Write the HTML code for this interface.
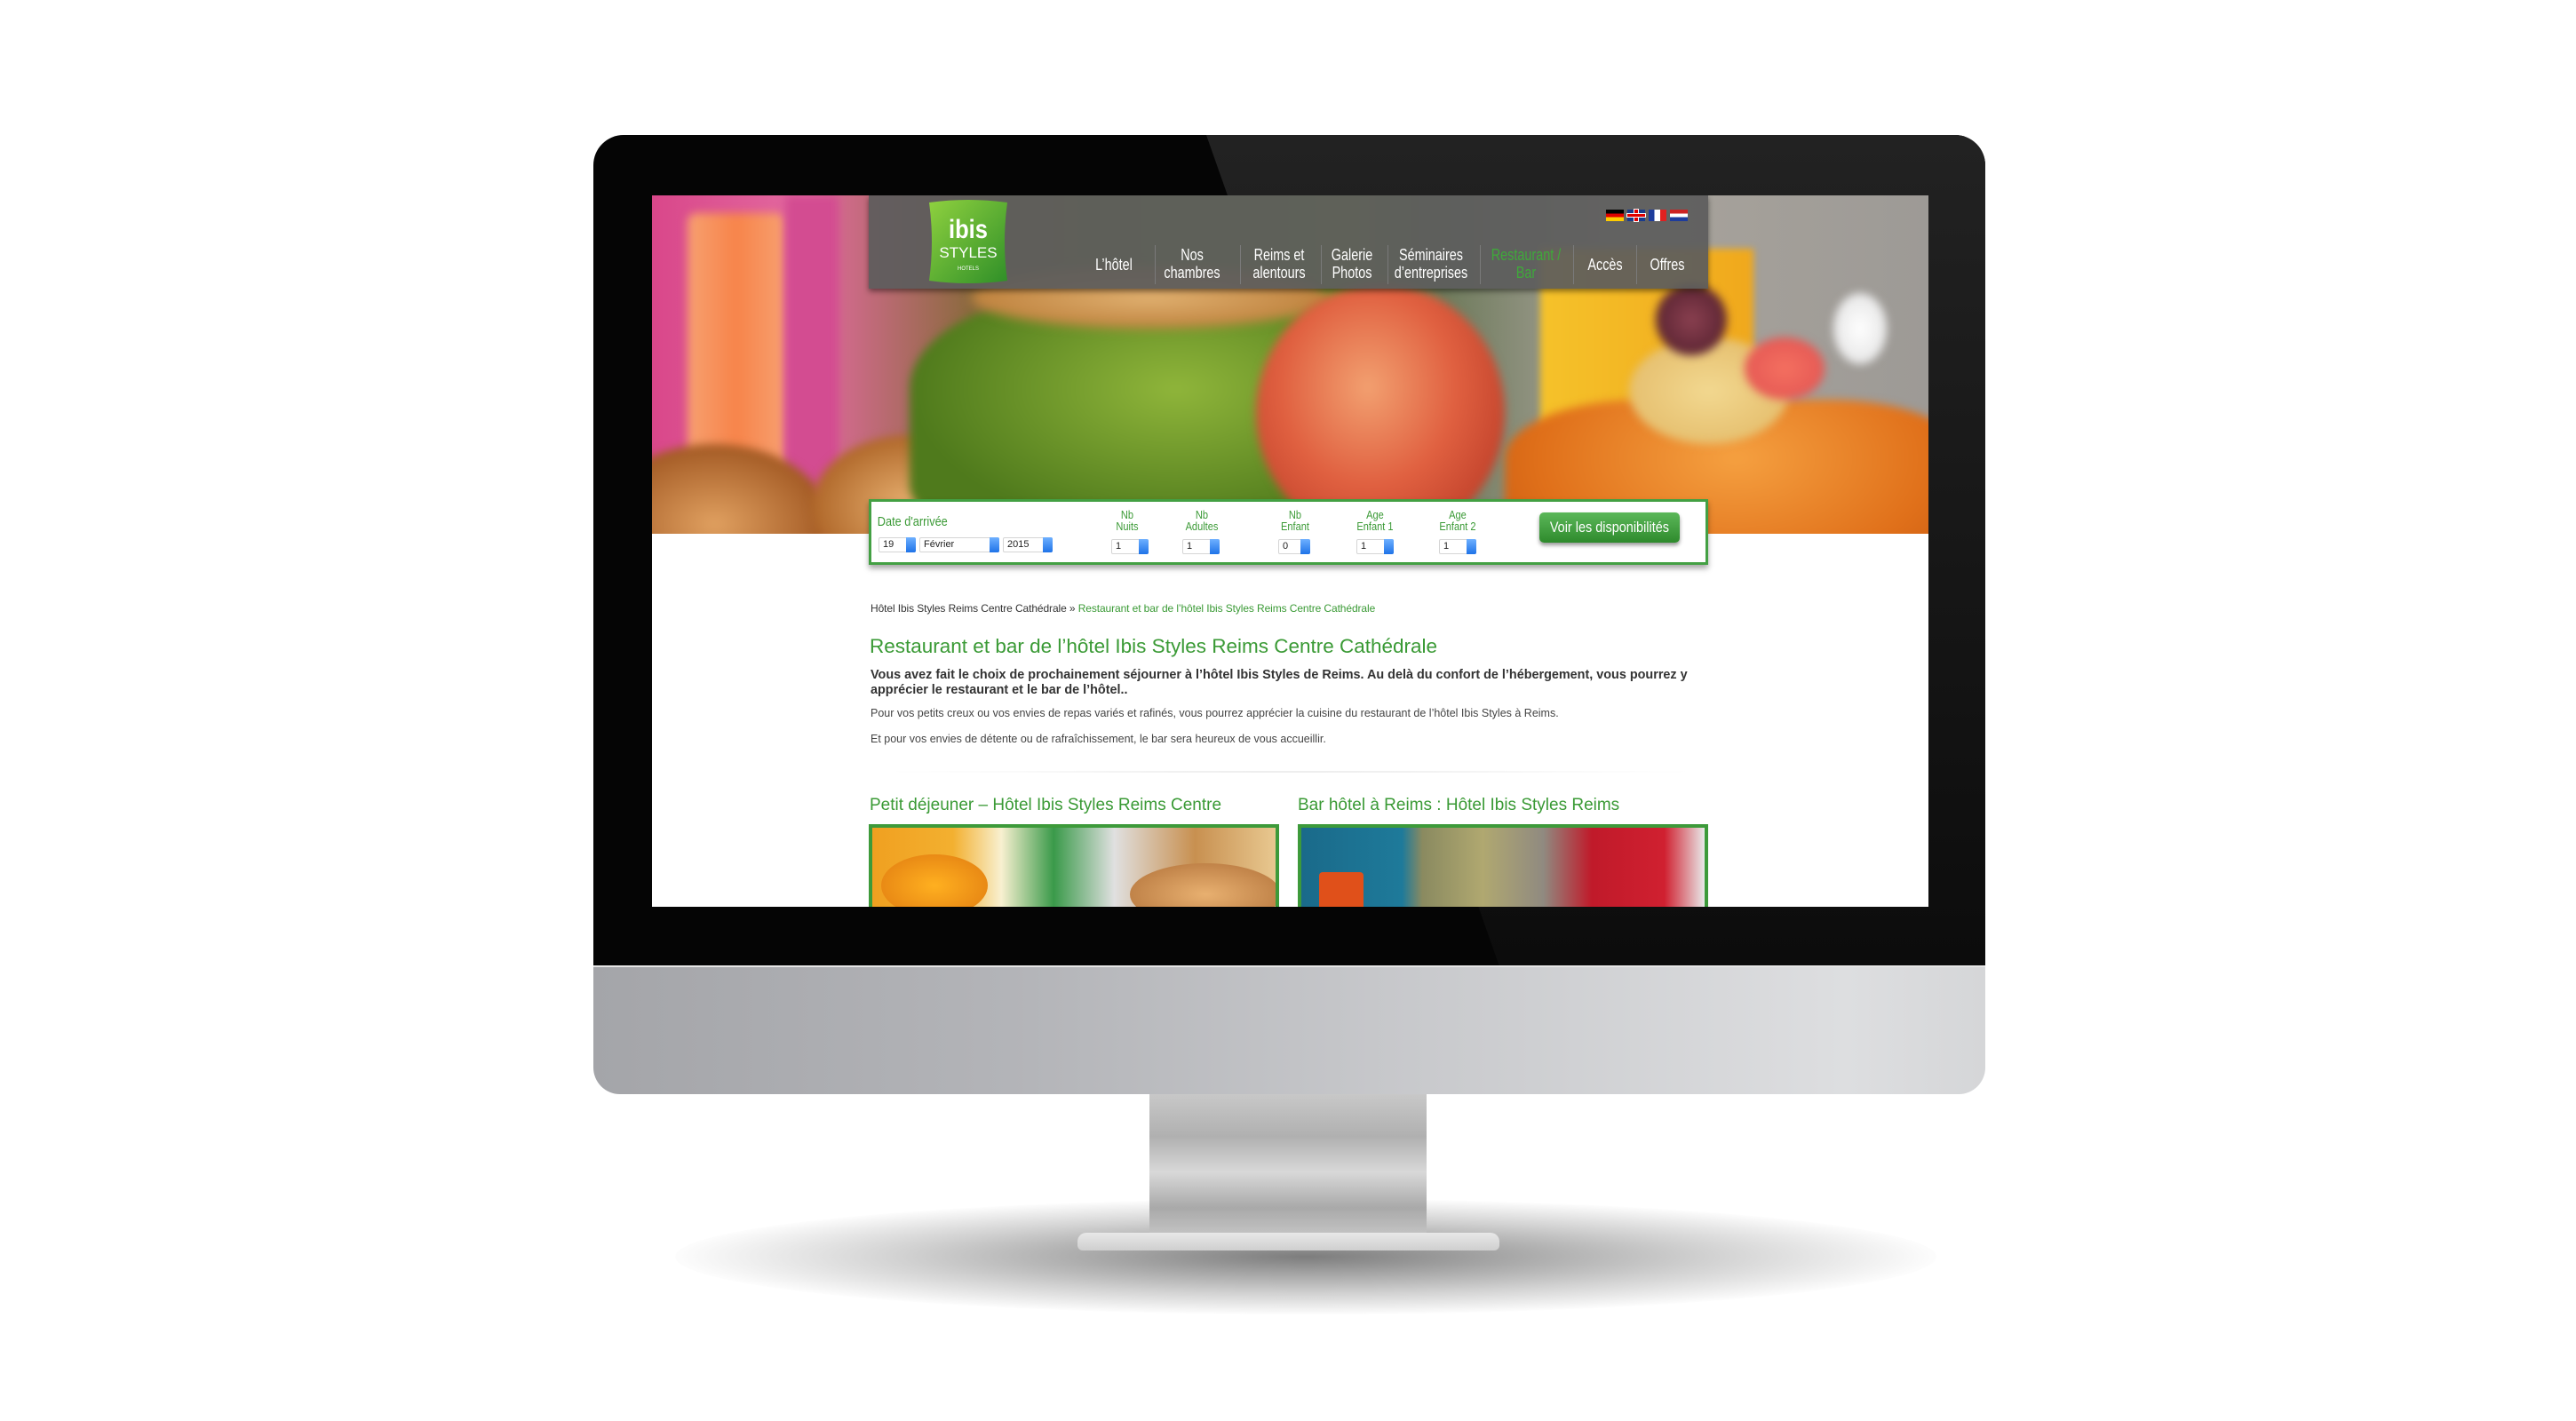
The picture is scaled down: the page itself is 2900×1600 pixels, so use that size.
<!DOCTYPE html>
<html><head><meta charset="utf-8">
<style>
*{margin:0;padding:0;box-sizing:border-box}
body{width:2900px;height:1600px;background:#fff;position:relative;overflow:hidden;font-family:"Liberation Sans",sans-serif}
.abs{position:absolute}
#bezel{left:668px;top:152px;width:1567px;height:936px;background:#050505;border-radius:34px 34px 0 0}
#glare{left:668px;top:152px;width:1567px;height:936px;border-radius:34px 34px 0 0;overflow:hidden}
#chin{left:668px;top:1087px;width:1567px;height:145px;background:linear-gradient(90deg,#a4a5a9 0%,#b3b4b8 30%,#c9cacd 60%,#dddee0 90%,#d5d6d8 100%);border-radius:0 0 30px 30px;border-top:2px solid #e6e6e6}
#shadow{left:760px;top:1350px;width:1420px;height:130px;border-radius:50%;background:radial-gradient(ellipse at center,rgba(70,70,70,.7) 0%,rgba(140,140,140,.4) 45%,rgba(255,255,255,0) 72%)}
#neck{left:1294px;top:1232px;width:312px;height:160px;background:linear-gradient(180deg,#c8c8c8 0%,#b0b0b0 30%,#d8d8d8 55%,#a9a9a9 80%,#c5c5c5 100%)}
#foot{left:1213px;top:1388px;width:475px;height:20px;background:linear-gradient(#e8e8e8,#cfcfcf);border-radius:10px 10px 6px 6px}
#screen{left:734px;top:220px;width:1437px;height:801px;background:#fff;overflow:hidden}
.hero{position:absolute;left:0;top:0;width:1437px;height:381px;overflow:hidden;background:linear-gradient(90deg,#d9478a 0%,#e36aa0 12%,#8b6a3e 25%,#6c8a2a 40%,#7d9a33 55%,#6f7b5c 62%,#a9a49c 75%,#9d9a96 100%)}
.hero .blob{filter:blur(5px)}
.blob{position:absolute;border-radius:50%}
#nav{left:244px;top:0;width:945px;height:105px;background:rgba(92,92,92,.93);box-shadow:0 3px 6px rgba(0,0,0,.45)}
.ni{position:absolute;top:57px;width:120px;color:#fff;font-size:18px;line-height:20px;text-align:center;transform:scaleX(.8);white-space:nowrap}
.sep{position:absolute;top:56px;width:1px;height:44px;background:#7a7a7a}
#book{left:244px;top:342px;width:945px;height:74px;background:#fff;border:3px solid #43a043;box-shadow:0 4px 6px rgba(0,0,0,.35)}
.lbl{position:absolute;color:#3b9a36;font-size:13px;line-height:13px;text-align:center;transform:scaleX(.85)}
.sel{position:absolute;height:17px;border:1px solid #d5d5d5;background:#fff;font-size:11px;line-height:15px;padding-left:4px;color:#222;border-radius:2px}
.sel i{position:absolute;right:-1px;top:-1px;width:11px;height:17px;background:linear-gradient(#6eb0ff,#1f73e8);border-radius:0 2px 2px 0}
.g{color:#3a9a35}
</style></head><body>
<div class="abs" id="shadow"></div>
<div class="abs" id="neck"></div>
<div class="abs" id="foot"></div>
<div class="abs" id="bezel"></div>
<div class="abs" id="glare"><svg width="1567" height="936"><defs><linearGradient id="gl" x1="0" y1="0" x2="0" y2="1"><stop offset="0" stop-color="#222"/><stop offset="1" stop-color="#0c0c0c"/></linearGradient></defs><polygon points="690,0 1567,0 1567,936 1020,936" fill="url(#gl)"/></svg></div>
<div class="abs" id="chin"></div>
<div class="abs" id="screen">
 <div class="hero">
  <div class="blob" style="left:40px;top:20px;width:110px;height:380px;border-radius:10px;background:linear-gradient(90deg,#f7a070,#f7844a 50%,#f7a070);"></div>
  <div class="blob" style="left:150px;top:0;width:60px;height:381px;border-radius:0;background:#d34c91"></div>
  <div class="blob" style="left:-60px;top:280px;width:260px;height:180px;background:radial-gradient(#e0a060,#a35a24 70%)"></div>
  <div class="blob" style="left:180px;top:270px;width:220px;height:160px;background:radial-gradient(#e8b070,#b0682a 70%)"></div>
  <div class="blob" style="left:290px;top:110px;width:500px;height:270px;border-radius:40% 40% 20% 20%;background:radial-gradient(ellipse at 60% 40%,#8fb53a,#4f7a1c 70%)"></div>
  <div class="blob" style="left:360px;top:80px;width:400px;height:70px;background:radial-gradient(#e0b070,#c08440 70%);filter:blur(6px)"></div>
  <div class="blob" style="left:1000px;top:60px;width:240px;height:230px;border-radius:0;background:linear-gradient(90deg,#f5c22a,#f0a81c);filter:blur(4px)"></div>
  <div class="blob" style="left:680px;top:100px;width:280px;height:290px;background:radial-gradient(ellipse at 45% 40%,#f2a070,#e06040 45%,#c0402a 80%)"></div>
  <div class="blob" style="left:960px;top:230px;width:520px;height:220px;border-radius:30% 30% 10% 10%;background:radial-gradient(ellipse at 50% 30%,#f5a040,#e0701a 60%,#c0520e)"></div>
  <div class="blob" style="left:1100px;top:160px;width:180px;height:120px;background:radial-gradient(#f2d890,#e6c070 70%)"></div>
  <div class="blob" style="left:1130px;top:100px;width:80px;height:80px;background:radial-gradient(#8a4050,#4a1a28)"></div>
  <div class="blob" style="left:1230px;top:160px;width:90px;height:70px;background:radial-gradient(#f47060,#e05050)"></div>
  <div class="blob" style="left:1330px;top:110px;width:60px;height:80px;background:radial-gradient(#fff,#ddd)"></div>
 </div>
 <div class="abs" id="nav">
  <svg class="abs" style="left:62px;top:4px" width="100" height="96" viewBox="0 0 100 96"><defs><linearGradient id="lg" x1="0" y1="0" x2="1" y2="1"><stop offset="0" stop-color="#8fd13f"/><stop offset="1" stop-color="#2f8f28"/></linearGradient></defs><path d="M6 4 Q50 -2 94 4 Q88 48 94 92 Q50 98 6 92 Q12 48 6 4Z" fill="url(#lg)"/><text x="50" y="44" text-anchor="middle" fill="#fff" font-family="Liberation Sans" font-weight="bold" font-size="30" transform="translate(50 0) scale(.85 1) translate(-50 0)">ibis</text><text x="50" y="66" text-anchor="middle" fill="#fff" font-family="Liberation Sans" font-size="17">STYLES</text><text x="50" y="80" text-anchor="middle" fill="#fff" font-family="Liberation Sans" font-size="6">HOTELS</text></svg>
  <div class="abs" style="left:830px;top:16px;width:92px;height:13px;display:flex;gap:4px">
   <div style="width:20px;height:13px;background:linear-gradient(#000 33%,#d00 33% 66%,#fc0 66%)"></div>
   <div style="width:20px;height:13px;background:#1a3c8c;position:relative"><div style="position:absolute;left:8px;top:0;width:4px;height:13px;background:#d00;box-shadow:0 0 0 1px #fff"></div><div style="position:absolute;left:0;top:5px;width:20px;height:3px;background:#d00;box-shadow:0 0 0 1px #fff"></div></div>
   <div style="width:20px;height:13px;background:linear-gradient(90deg,#1e3c9c 33%,#fff 33% 66%,#e02020 66%)"></div>
   <div style="width:20px;height:13px;background:linear-gradient(#c22 33%,#fff 33% 66%,#1e3c9c 66%)"></div>
  </div>
  <div class="ni" style="left:216px;top:68px">L’hôtel</div>
  <div class="sep" style="left:322px"></div>
  <div class="ni" style="left:304px">Nos<br>chambres</div>
  <div class="sep" style="left:418px"></div>
  <div class="ni" style="left:402px">Reims et<br>alentours</div>
  <div class="sep" style="left:509px"></div>
  <div class="ni" style="left:484px">Galerie<br>Photos</div>
  <div class="sep" style="left:584px"></div>
  <div class="ni" style="left:573px">Séminaires<br>d’entreprises</div>
  <div class="sep" style="left:688px"></div>
  <div class="ni" style="left:680px;color:#3fa93a">Restaurant /<br>Bar</div>
  <div class="sep" style="left:793px"></div>
  <div class="ni" style="left:769px;top:68px">Accès</div>
  <div class="sep" style="left:864px"></div>
  <div class="ni" style="left:839px;top:68px">Offres</div>
 </div>
 <div class="abs" id="book">
  <div class="lbl" style="left:0px;top:16px;text-align:left;font-size:15px;transform-origin:0 0;padding-left:8px">Date d'arrivée</div>
  <div class="sel" style="left:8px;top:40px;width:42px">19<i></i></div>
  <div class="sel" style="left:54px;top:40px;width:90px">Février<i></i></div>
  <div class="sel" style="left:148px;top:40px;width:56px">2015<i></i></div>
  <div class="lbl" style="left:268px;top:8px;width:40px">Nb<br>Nuits</div>
  <div class="sel" style="left:270px;top:42px;width:42px">1<i></i></div>
  <div class="lbl" style="left:344px;top:8px;width:56px">Nb<br>Adultes</div>
  <div class="sel" style="left:350px;top:42px;width:42px">1<i></i></div>
  <div class="lbl" style="left:452px;top:8px;width:50px">Nb<br>Enfant</div>
  <div class="sel" style="left:458px;top:42px;width:36px">0<i></i></div>
  <div class="lbl" style="left:537px;top:8px;width:60px">Age<br>Enfant 1</div>
  <div class="sel" style="left:546px;top:42px;width:42px">1<i></i></div>
  <div class="lbl" style="left:630px;top:8px;width:60px">Age<br>Enfant 2</div>
  <div class="sel" style="left:639px;top:42px;width:42px">1<i></i></div>
  <div class="abs" style="left:752px;top:12px;width:158px;height:34px;border-radius:5px;background:linear-gradient(#5cb85a,#2e8a2c);box-shadow:0 3px 4px rgba(0,0,0,.4);color:#fff;font-size:17px;line-height:34px;text-align:center;overflow:hidden"><span style="display:inline-block;transform:scaleX(.85);white-space:nowrap">Voir les disponibilités</span></div>
 </div>
 <div class="abs" style="left:246px;top:458px;font-size:12px;color:#333;white-space:nowrap;letter-spacing:-.1px">Hôtel Ibis Styles Reims Centre Cathédrale » <span class="g">Restaurant et bar de l’hôtel Ibis Styles Reims Centre Cathédrale</span></div>
 <div class="abs g" style="left:245px;top:495px;font-size:22.5px;white-space:nowrap;letter-spacing:0">Restaurant et bar de l’hôtel Ibis Styles Reims Centre Cathédrale</div>
 <div class="abs" style="left:246px;top:532px;width:925px;font-size:14.4px;line-height:17px;font-weight:bold;color:#333;letter-spacing:0">Vous avez fait le choix de prochainement séjourner à l’hôtel Ibis Styles de Reims. Au delà du confort de l’hébergement, vous pourrez y apprécier le restaurant et le bar de l’hôtel..</div>
 <div class="abs" style="left:246px;top:576px;font-size:12.5px;color:#444;white-space:nowrap;letter-spacing:0">Pour vos petits creux ou vos envies de repas variés et rafinés, vous pourrez apprécier la cuisine du restaurant de l’hôtel Ibis Styles à Reims.</div>
 <div class="abs" style="left:246px;top:605px;font-size:12.5px;color:#444;white-space:nowrap;letter-spacing:0">Et pour vos envies de détente ou de rafraîchissement, le bar sera heureux de vous accueillir.</div>
 <div class="abs" style="left:246px;top:648px;width:945px;height:2px;background:radial-gradient(ellipse at center,#ddd,rgba(255,255,255,0) 70%)"></div>
 <div class="abs g" style="left:245px;top:676px;font-size:19px;white-space:nowrap;letter-spacing:0">Petit déjeuner – Hôtel Ibis Styles Reims Centre</div>
 <div class="abs g" style="left:727px;top:676px;font-size:19px;white-space:nowrap;letter-spacing:0">Bar hôtel à Reims : Hôtel Ibis Styles Reims</div>
 <div class="abs" style="left:244px;top:708px;width:462px;height:100px;border:4px solid #3d9a3a;overflow:hidden;background:linear-gradient(90deg,#f0a020 0%,#f3b030 20%,#f8f0d0 32%,#3a9a4a 45%,#e0e0e0 60%,#c89050 80%,#e8c890 100%)">
  <div class="blob" style="left:10px;top:30px;width:120px;height:70px;background:radial-gradient(#ffb020,#e07a10)"></div>
  <div class="blob" style="left:290px;top:40px;width:170px;height:70px;background:radial-gradient(#e8b070,#b07038)"></div>
 </div>
 <div class="abs" style="left:727px;top:708px;width:462px;height:100px;border:4px solid #3d9a3a;overflow:hidden;background:linear-gradient(90deg,#1a6a8a 0%,#1e7a9a 25%,#8a8a60 30%,#b0a870 45%,#908a80 60%,#c01a2a 72%,#d02030 90%,#e8e8e8 100%)">
  <div class="blob" style="left:20px;top:50px;width:50px;height:50px;border-radius:4px;background:#e0501a"></div>
 </div>
</div>
</body></html>
